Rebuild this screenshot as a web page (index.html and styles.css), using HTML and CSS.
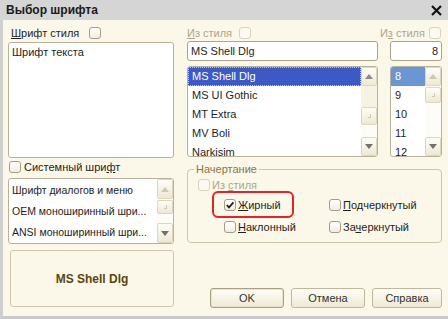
FILE: index.html
```html
<!DOCTYPE html>
<html lang="ru">
<head>
  <meta charset="UTF-8">
  <title>Выбор шрифта</title>
  <link rel="stylesheet" href="styles.css">
</head>
<body>
  <div class="window">
    <div class="titlebar">
      <span class="title">Выбор шрифта</span>
      <svg class="close" width="11" height="11" viewBox="0 0 11 11"><path d="M1 1L10 10M10 1L1 10" stroke="#111" stroke-width="2.2"/></svg>
    </div>

    <div class="body">
      <div class="col-left">
        <div class="head-row">
          <span><u>Ш</u>рифт стиля</span>
          <span class="cb"></span>
        </div>
        <div class="box textbox">Шрифт текста</div>
        <div class="check sys"><span class="cb"></span><span>Системный шри<u>ф</u>т</span></div>
        <div class="box list syslist">
          <div class="rows">
            <div class="row">Шрифт диалогов и меню</div>
            <div class="row">OEM моноширинный шри...</div>
            <div class="row">ANSI моноширинный шри...</div>
            <div class="row">ANSI пропорциональный ш...</div>
          </div>
          <div class="scroll">
            <div class="sb-btn tall off"><span class="arrow-up"></span></div>
            <div class="sb-thumb small"></div>
            <div class="sb-track"></div>
            <div class="sb-btn tall"><span class="arrow-down"></span></div>
          </div>
        </div>
        <div class="box preview">MS Shell Dlg</div>
      </div>

      <div class="col-right">
        <div class="head-row right-head">
          <div class="name-head"><span class="dim"><u>И</u>з стиля</span><span class="cb dis"></span></div>
          <div class="size-head"><span class="dim">И<u>з</u> стиля</span><span class="cb dis"></span></div>
        </div>
        <div class="input-row">
          <div class="box input name-input">MS Shell Dlg</div>
          <div class="box input size-input">8</div>
        </div>
        <div class="list-row">
          <div class="box list fontlist">
            <div class="rows">
              <div class="row selected">MS Shell Dlg</div>
              <div class="row">MS UI Gothic</div>
              <div class="row">MT Extra</div>
              <div class="row">MV Boli</div>
              <div class="row">Narkisim</div>
            </div>
            <div class="scroll">
              <div class="sb-btn"><span class="arrow-up"></span></div>
              <div class="sb-track pre"></div>
              <div class="sb-thumb"></div>
              <div class="sb-track"></div>
              <div class="sb-btn"><span class="arrow-down"></span></div>
            </div>
          </div>
          <div class="box list sizelist">
            <div class="rows">
              <div class="row selected-light">8</div>
              <div class="row">9</div>
              <div class="row">10</div>
              <div class="row">11</div>
              <div class="row">12</div>
            </div>
            <div class="scroll">
              <div class="sb-btn off"><span class="arrow-up"></span></div>
              <div class="sb-thumb near"></div>
              <div class="sb-track"></div>
              <div class="sb-btn"><span class="arrow-down"></span></div>
            </div>
          </div>
        </div>

        <fieldset class="group">
          <legend>Начертание</legend>
          <div class="check from-style"><span class="cb dis"></span><span class="dim">Из <u>с</u>тиля</span></div>
          <div class="styles">
            <div class="check ring">
              <span class="cb"><svg width="10" height="10" viewBox="0 0 10 10"><path d="M1.8 5.2L4 7.4L8.4 2.4" fill="none" stroke="#1e1e1e" stroke-width="1.7"/></svg></span>
              <span><u>Ж</u>ирный</span>
            </div>
            <div class="check"><span class="cb"></span><span><u>П</u>одчеркнутый</span></div>
            <div class="check"><span class="cb"></span><span><u>Н</u>аклонный</span></div>
            <div class="check"><span class="cb"></span><span>За<u>ч</u>еркнутый</span></div>
          </div>
        </fieldset>

        <div class="buttons">
          <div class="btn default">OK</div>
          <div class="btn">Отмена</div>
          <div class="btn help">Справка</div>
        </div>
      </div>
    </div>
  </div>
</body>
</html>
```

FILE: styles.css
```css
* {
  box-sizing: border-box;
}
body {
  margin: 0;
  font-family: "Liberation Sans", Arial, sans-serif;
  font-size: 11px;
  color: #1e1e1e;
}
.window {
  width: 448px;
  height: 319px;
  background: #fbf8ea;
  overflow: hidden;
}
.titlebar {
  height: 20px;
  background: #d5d5d5;
  display: flex;
  align-items: center;
  justify-content: space-between;
  padding: 0 6px;
}
.title {
  font-size: 12px;
  font-weight: bold;
  color: #1a1a1a;
}
.body {
  display: flex;
  gap: 13px;
  height: 299px;
  border-left: 3px solid #cfcfcf;
  border-bottom: 3px solid #c9c9c9;
  padding: 6px 6px 0 5px;
}
.col-left {
  width: 166px;
  display: flex;
  flex-direction: column;
}
.col-right {
  width: 255px;
  display: flex;
  flex-direction: column;
}
u {
  text-decoration: underline;
  text-underline-offset: 1px;
}
.dim {
  color: #aca68c;
}

/* checkboxes */
.cb {
  width: 12px;
  height: 12px;
  flex: none;
  display: inline-flex;
  align-items: center;
  justify-content: center;
  border: 1px solid #a39d86;
  border-radius: 3px;
  background: linear-gradient(#ffffff, #f0ede0);
}
.cb.dis {
  border-color: #d8d3c0;
  background: #fbf9f1;
}
.check {
  display: flex;
  align-items: center;
  gap: 2px;
  height: 13px;
  white-space: nowrap;
}

/* boxes */
.box {
  background: #ffffff;
  border: 1px solid #b8b29b;
  border-radius: 3px;
}
.head-row {
  height: 13px;
  display: flex;
  align-items: center;
}
.col-left .head-row {
  padding-left: 3px;
  gap: 10px;
}
.textbox {
  margin-top: 3px;
  height: 116px;
  padding: 3px 3px;
}
.sys {
  margin-top: 2px;
  padding-left: 1px;
  gap: 3px;
}
.syslist {
  margin-top: 5px;
  height: 66px;
}
.preview {
  margin: 6px 0 0 2px;
  width: 164px;
  height: 57px;
  background: transparent;
  border-color: #cdc7ae;
  display: flex;
  align-items: center;
  justify-content: center;
  font-size: 12px;
  font-weight: bold;
  color: #58470f;
}

/* lists */
.list {
  display: flex;
  overflow: hidden;
}
.rows {
  flex: 1;
  overflow: hidden;
}
.row {
  height: 19px;
  line-height: 19px;
  padding-left: 4px;
  white-space: nowrap;
  overflow: hidden;
}
.syslist .row {
  height: 21px;
  line-height: 21px;
  font-size: 10.5px;
  padding-left: 3px;
}
.syslist .row:first-child {
  height: 22px;
  line-height: 23px;
}
.selected {
  background: #3d59c4;
  color: #ffffff;
  outline: 1px dotted #b9c4f0;
  outline-offset: -1px;
}
.selected-light {
  background: #6c95d3;
  color: #ffffff;
}

/* scrollbars */
.scroll {
  width: 16px;
  flex: none;
  display: flex;
  flex-direction: column;
  background: #fdfcf6;
}
.sb-btn,
.sb-thumb {
  border: 1px solid #dcd6bf;
  border-radius: 2px;
  background: linear-gradient(#fefdf8, #eee8d3);
  display: flex;
  align-items: center;
  justify-content: center;
  flex: none;
}
.sb-btn {
  height: 19px;
}
.sb-btn.tall {
  height: 20px;
}
.sb-thumb {
  height: 18px;
}
.sb-thumb.small {
  height: 14px;
  margin-top: 1px;
}
.sb-thumb.near {
  height: 16px;
  margin-top: 1px;
}
.sb-thumb::after {
  content: "";
  width: 2px;
  height: 3px;
  border-right: 1px solid #cfc9b1;
  border-bottom: 1px solid #cfc9b1;
}
.sb-track {
  flex: 1;
}
.sb-track.pre {
  flex: none;
  height: 21px;
  background: #f6f3e4;
}
.arrow-up,
.arrow-down {
  width: 0;
  height: 0;
  border-left: 4px solid transparent;
  border-right: 4px solid transparent;
}
.arrow-up {
  border-bottom: 5px solid #8a8a86;
}
.arrow-down {
  border-top: 5px solid #70706c;
}
.sb-btn.off .arrow-up {
  border-bottom-color: #cdc8b4;
}

/* right column */
.right-head {
  justify-content: space-between;
}
.name-head,
.size-head {
  display: flex;
  align-items: center;
}
.name-head {
  gap: 7px;
}
.size-head {
  gap: 4px;
  padding-right: 1px;
}
.input-row,
.list-row {
  display: flex;
  justify-content: space-between;
}
.input-row {
  margin-top: 2px;
}
.input {
  height: 20px;
  line-height: 18px;
  border-color: #aaa48d;
  padding: 0 3px;
}
.name-input {
  width: 191px;
}
.size-input {
  width: 52px;
  text-align: right;
}
.list-row {
  margin-top: 5px;
  height: 91px;
}
.fontlist {
  width: 191px;
}
.sizelist {
  width: 52px;
}

/* style group */
.group {
  margin: 6px 0 0 0;
  padding: 0 10px;
  height: 80px;
  min-width: 0;
  border: 1px solid #cdc6ab;
  border-radius: 4px;
}
.group legend {
  padding: 0 2px;
  margin-left: -4px;
  color: #8d7443;
}
.from-style {
  margin-top: 3px;
}
.styles {
  margin-top: 7px;
  padding-left: 26px;
  display: grid;
  grid-template-columns: 105px 1fr;
  row-gap: 9px;
}
.ring {
  position: relative;
}
.ring::before {
  content: "";
  position: absolute;
  left: -12px;
  top: -7px;
  width: 78px;
  height: 23px;
  border: 2px solid #e3222b;
  border-radius: 6px;
}

/* buttons */
.buttons {
  display: flex;
  justify-content: flex-end;
  gap: 7px;
  margin-top: auto;
  margin-bottom: 8px;
}
.btn {
  width: 74px;
  height: 20px;
  border: 1px solid #bfb89b;
  border-radius: 3px;
  background: linear-gradient(#fffef9, #efe9d3);
  display: flex;
  align-items: center;
  justify-content: center;
  color: #333333;
}
.btn.default {
  border-color: #a8a081;
  box-shadow: inset 0 0 0 1px #e9e2c8;
}
.btn.help {
  width: 70px;
}
```
